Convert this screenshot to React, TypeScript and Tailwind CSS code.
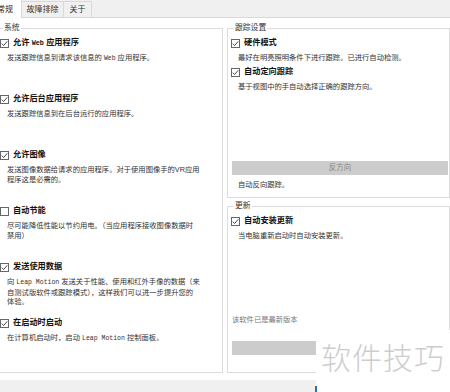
import type { ReactNode } from "react"

function Check({ checked = true }: { checked?: boolean }) {
  return (
    <svg width="9" height="9" viewBox="0 0 9 9" className="shrink-0">
      <rect x="0.5" y="0.5" width="8" height="8" fill="#fff" stroke="#666" />
      {checked && <path d="M1.8 4.6 3.6 6.5 7.3 2.3" fill="none" stroke="#333" strokeWidth="0.9" />}
    </svg>
  )
}

function Mono({ children, bold }: { children: ReactNode; bold?: boolean }) {
  return (
    <span className={bold ? "font-['Liberation_Mono',monospace] text-[6.8px] font-bold" : "font-['Liberation_Mono',monospace] text-[6.5px]"}>
      {children}
    </span>
  )
}

function Option({ title, checked = true, children, tall = true }: { title: ReactNode; checked?: boolean; children?: ReactNode; tall?: boolean }) {
  return (
    <div className={tall ? "h-[56px]" : "h-[29px]"}>
      <div className="flex h-[12px] items-center gap-[4px]">
        <Check checked={checked} />
        <span className="whitespace-nowrap text-[8.2px] font-bold text-[#111]">{title}</span>
      </div>
      <p className="mt-[4px] whitespace-nowrap pl-[7px] text-[7.3px] leading-[9.5px] text-[#333]">{children}</p>
    </div>
  )
}

function Group({ label, className, children }: { label: string; className: string; children: ReactNode }) {
  return (
    <fieldset className={"border border-[#dcdcdc] pl-[3px] " + className}>
      <legend className="ml-[3px] px-[1px] text-[7.8px] leading-[10px] text-[#333]">{label}</legend>
      {children}
    </fieldset>
  )
}

export default function App() {
  return (
    <div className="relative h-[392px] w-[450px] overflow-hidden bg-[#f0f0f0] font-['Liberation_Sans','Noto_Sans_CJK_SC',sans-serif]">
      {/* tabs */}
      <div className="flex h-[18px] items-end border-b border-[#d9d9d9]">
        <div className="-mb-px -ml-[12px] flex h-[19px] w-[34px] items-center justify-center border-x border-t border-[#d9d9d9] bg-white pt-[2px] text-[8px] text-[#222]">
          常规
        </div>
        <div className="flex h-[16px] w-[42px] items-center justify-center border-t border-r border-[#d9d9d9] pt-[1px] text-[8px] text-[#333]">
          故障排除
        </div>
        <div className="flex h-[16px] w-[28px] items-center justify-center border-t border-r border-[#d9d9d9] pt-[1px] text-[8px] text-[#333]">
          关于
        </div>
      </div>

      {/* page */}
      <div className="h-[362px] bg-white">
        <div className="-ml-[4px] flex gap-[4px]">
          <Group label="系统" className="mt-[5px] h-[350px] w-[227px]">
            <div className="pt-[4px]">
              <Option title={<>允许 <Mono bold>Web</Mono> 应用程序</>}>
                发送跟踪信息到请求该信息的 <Mono>Web</Mono> 应用程序。
              </Option>
              <Option title="允许后台应用程序">发送跟踪信息到在后台运行的应用程序。</Option>
              <Option title="允许图像">
                发送图像数据给请求的应用程序。对于使用图像手的VR应用
                <br />
                程序这是必需的。
              </Option>
              <Option title="自动节能" checked={false}>
                尽可能降低性能以节约用电。（当应用程序接收图像数据时
                <br />
                禁用）
              </Option>
              <Option title="发送使用数据">
                向 <Mono>Leap Motion</Mono> 发送关于性能、使用和红外手像的数据（来
                <br />
                自测试版软件或跟踪模式），这样我们可以进一步提升您的
                <br />
                体验。
              </Option>
              <Option title="在启动时启动">
                在计算机启动时，启动 <Mono>Leap Motion</Mono> 控制面板。
              </Option>
            </div>
          </Group>

          <div className="flex w-[223px] flex-col">
            <Group label="跟踪设置" className="mt-[5px] h-[175px] pr-[1px]">
              <div className="pt-[4px]">
                <Option title="硬件模式" tall={false}>
                  最好在明亮照明条件下进行跟踪。已进行自动检测。
                </Option>
                <Option title="自动定向跟踪" tall={false}>
                  基于视图中的手自动选择正确的跟踪方向。
                </Option>
                <div className="ml-[1px] mt-[66px] flex h-[14px] items-center justify-center bg-[#cccccc] text-[7.5px] text-[#8a8a8a]">
                  反方向
                </div>
                <p className="mt-[5px] pl-[7px] text-[7.3px] leading-[10px] text-[#333]">自动反向跟踪。</p>
              </div>
            </Group>

            <Group label="更新" className="mt-[3px] h-[172px] pr-[1px]">
              <div className="pt-[4px]">
                <Option title="自动安装更新" tall={false}>
                  当电脑重新启动时自动安装更新。
                </Option>
                <p className="mt-[71px] pl-[1px] text-[7.3px] leading-[10px] text-[#777]">该软件已是最新版本</p>
                <div className="ml-[1px] mt-[16px] h-[14px] bg-[#cccccc]" />
              </div>
            </Group>
          </div>
        </div>
      </div>

      {/* watermark */}
      <div className="absolute left-[316px] top-[330px] flex h-[62px] w-[134px] items-center justify-center bg-white pb-[6px]">
        <span className="whitespace-nowrap text-[30px] font-light tracking-[1px] text-[#cdcdcd]">软件技巧</span>
        <div className="absolute bottom-0 left-[-1px] h-[6px] w-[2px] bg-[#2f6fa6]" />
      </div>
    </div>
  )
}
